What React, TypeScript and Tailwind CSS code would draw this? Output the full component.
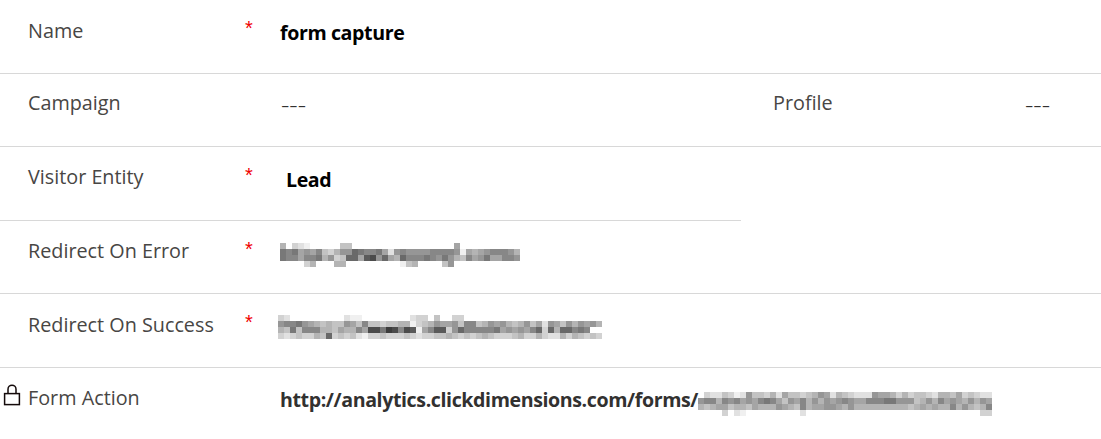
const font = "font-['Open_Sans','Liberation_Sans',sans-serif]";

// grey levels of the pixelated (redacted) urls, one string per 6px row
const errorCells = [
  "b.def.....cc.................a..........",
  "787a9a8cdb9967887ae98999988889fabA98889b",
  "788a887b9dc66a5496ab688878979bc8a97aa889",
  "....db...bb.........fcb....c9...........",
];
const successCells = [
  "de.........eff........edd.c..dd......................",
  "98879abcbcc9ac8ccdccbbfdcb9aa9c88cb9a9bcb9cae9ac9b9a9b",
  "bc7c888bbcabb8a44734845fa855d96888887a9a9a86d6b66878",
  "dedcddbc6dcdcefddcdddcdeddccbcdcdcbcdddcbddbdeebdbcdcd",
];
const actionCells = [
  ".deecdfe9ccdbeaccdcb9aebcdeee9aabdbdccdebbcadcdee",
  "988b898a9a878ac9a8b9b9a989aa88877999cb9b8a9ab9b9a",
  "bcbaacbbcabbb9abc8baa99ab9bbbbbbbbbcbababb8b9bcb8",
  "....d.ef.........e.............................dd",
];

function Mosaic({ rows, className }: { rows: string[]; className: string }) {
  const width = Math.max(...rows.map((r) => r.length)) * 6;
  return (
    <svg width={width} height={24} shapeRendering="crispEdges" className={`block ${className}`}>
      {rows.map((row, y) =>
        row.split("").map((c, x) => {
          if (c === ".") return null;
          const v = parseInt(c, 16) * 15 + 15;
          return <rect key={`${x}-${y}`} x={x * 6} y={y * 6} width={6} height={6} fill={`rgb(${v},${v},${v})`} />;
        }),
      )}
    </svg>
  );
}

function LockIcon() {
  return (
    <svg width="18" height="22" viewBox="0 0 18 22" fill="none" stroke="#140a0a" strokeWidth="1.5" className="absolute left-[3px] top-[16px]">
      <rect x="1.6" y="9.6" width="14.8" height="11" />
      <path d="M5 9.6V5.2a4 4 0 0 1 8 0v4.4" />
    </svg>
  );
}

function Label({ children, className = "" }: { children: React.ReactNode; className?: string }) {
  return <div className={`w-[217px] shrink-0 text-[19.8px] leading-[26px] text-[#484644] ${className}`}>{children}</div>;
}

function Star({ show = true }: { show?: boolean }) {
  return <div className="w-[36px] shrink-0 font-['Liberation_Sans',sans-serif] text-[20px] leading-[20px] text-[#f00000]">{show ? "*" : ""}</div>;
}

function Row({ children, className = "h-[74px]" }: { children: React.ReactNode; className?: string }) {
  return <div className={`flex border-b border-[#d8d8d8] pl-[28px] pt-[18px] ${className}`}>{children}</div>;
}

export default function App() {
  return (
    <div className={`h-[439px] w-[1101px] overflow-hidden bg-white ${font}`}>
      <Row>
        <Label>Name</Label>
        <Star />
        <div className="-ml-[1px] mt-[2px] text-[19.6px] leading-[26px] font-bold tracking-[-0.4px] text-black">form capture</div>
      </Row>
      <Row className="h-[73px]">
        <Label className="-mt-[2px]">Campaign</Label>
        <Star show={false} />
        <div className="w-[492px] -mt-[1px] text-[26px] leading-[26px] font-light text-[#323130]">---</div>
        <div className="w-[252px] -mt-[2px] text-[19.8px] leading-[26px] text-[#484644]">Profile</div>
        <div className="-mt-[1px] text-[26px] leading-[26px] font-light text-[#323130]">---</div>
      </Row>
      <Row className="h-[74px] w-[741px]">
        <Label className="-mt-[1px]">Visitor Entity</Label>
        <Star />
        <div className="ml-[5px] mt-[2px] text-[19.6px] leading-[26px] font-bold tracking-[-0.4px] text-black">Lead</div>
      </Row>
      <Row className="h-[73px]">
        <Label className="-mt-[1px]">Redirect On Error</Label>
        <Star />
        <Mosaic rows={errorCells} className="-ml-[1px] mt-[4px]" />
      </Row>
      <Row>
        <Label>Redirect On Success</Label>
        <Star />
        <Mosaic rows={successCells} className="-ml-[3px] mt-[3px]" />
      </Row>
      <div className="relative flex pl-[28px] pt-[17px]">
        <LockIcon />
        <Label>Form Action</Label>
        <div className="w-[36px] shrink-0" />
        <div className="flex -ml-[1px] mt-[2px] text-[19.6px] leading-[26px] font-bold tracking-[-0.4px] text-[#323130] whitespace-nowrap">
          http://analytics.clickdimensions.com/forms/
          <Mosaic rows={actionCells} className="mt-[5px]" />
        </div>
      </div>
    </div>
  );
}
